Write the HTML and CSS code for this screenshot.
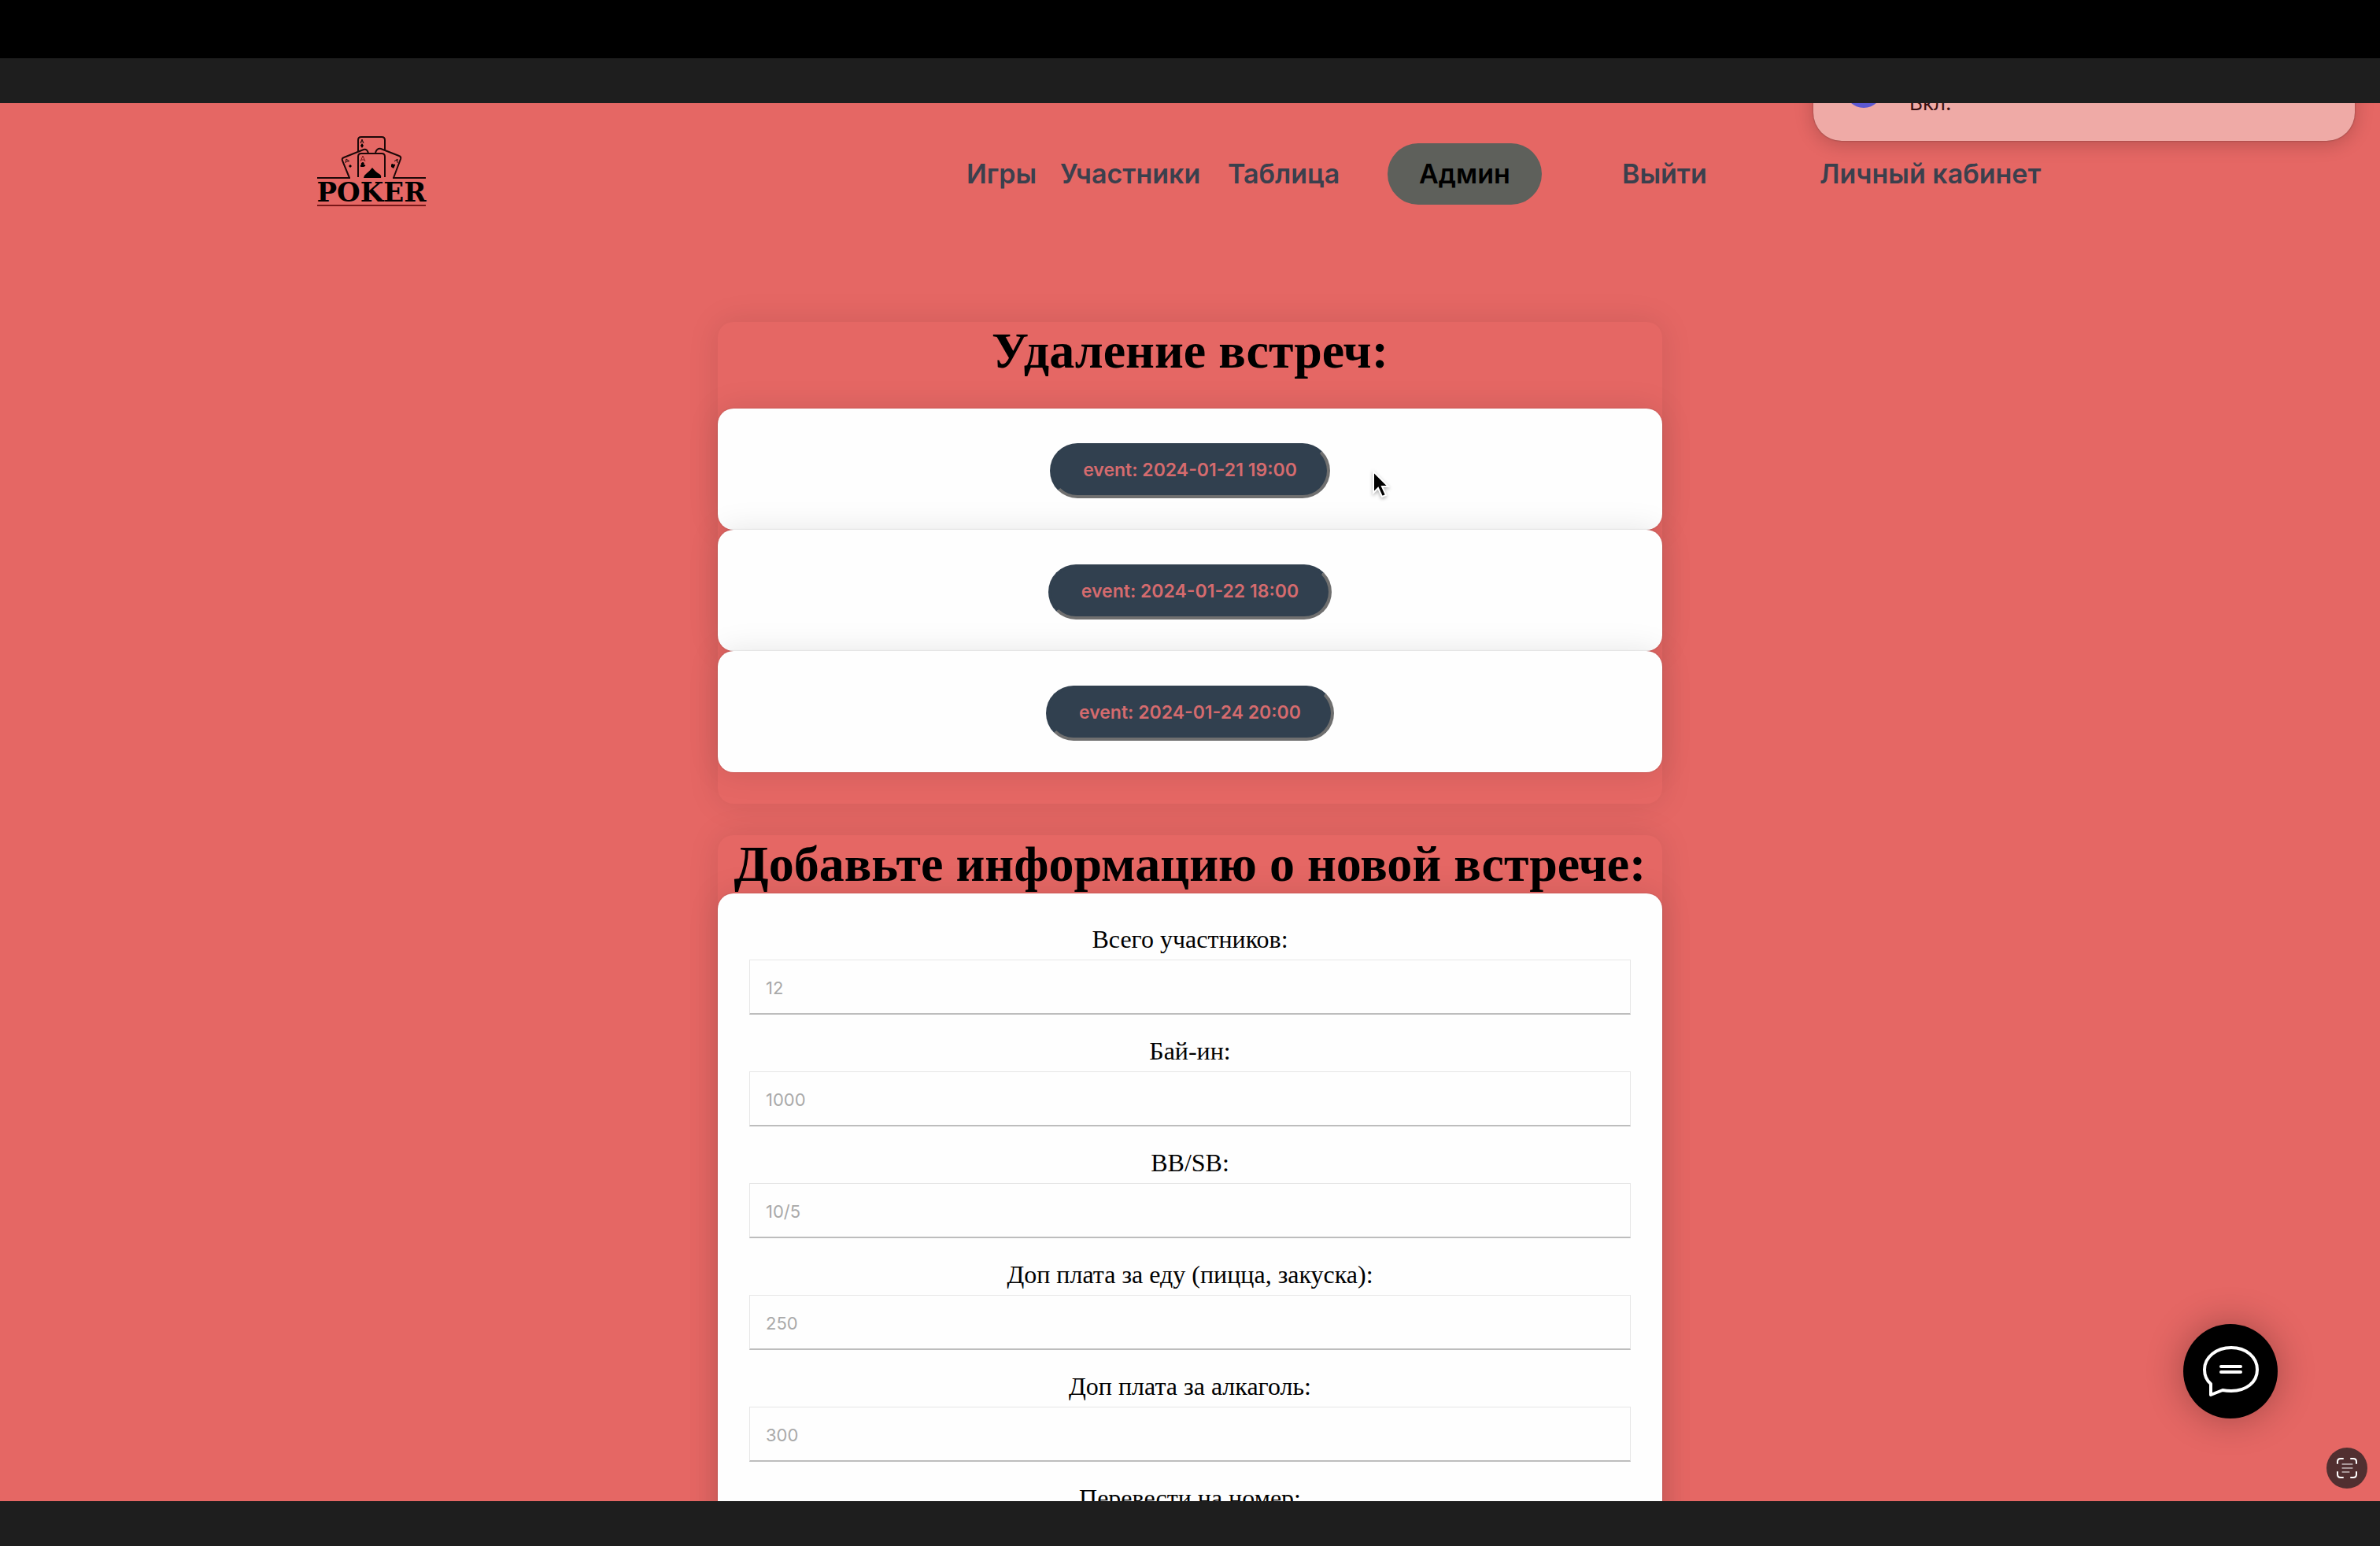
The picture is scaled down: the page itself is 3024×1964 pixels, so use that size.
FILE: index.html
```html
<!DOCTYPE html>
<html lang="ru">
<head>
<meta charset="utf-8">
<meta name="viewport" content="width=device-width, initial-scale=1">
<title>Poker</title>
<link rel="stylesheet" href="styles.css">
</head>
<body>
<div class="bezel"></div>
<div class="strip"></div>
<div class="screen">
  <header class="header">
    <a class="logo" href="#" aria-label="Poker">
      <svg width="144" height="96" viewBox="0 2 144 96" fill="none" stroke="#1c0808" stroke-width="2">
        <path d="M55 22V7q0-4 4-4h26q4 0 4 4v13"/>
        <path d="M44 55 35 33q-1-3 2-4l25-10q5-1 6 5"/>
        <path d="M100 55l9-24q1-3-2-4L84 18q-5-1-7 5"/>
        <path d="M55 54V28q0-4 4-4h26q4 0 4 4v26"/>
        <path d="M3 55h42M99 55h42"/>
        <path d="M3 90h138" stroke="#7a1718"/>
        <g stroke-width="1">
          <path d="M58 11l2-5 2 5M59 9h2"/>
          <path d="M39 36l1-5 4 3M40 34h3M101 34l4-3 0 5M103 33h2"/>
          <path d="M58 34l3-7 3 7M59 32h4" stroke="#7a1718"/>
        </g>
        <g fill="#000" stroke="none">
          <path d="M60 11l2 3-2 3-2-3zM45 38l2 2-2 2-2-2zM97 38q2-2 3 0 3-1 2 1l-2 4-3-2z"/>
          <path d="M61 35q3 1 1 3 3 0 2 2l-2 1h-2q-3 0-2-2l1-1q-1-2 2-3z"/>
          <path d="M73 42q5 6 9 8 3 2 2 5H62q0-3 3-5 5-4 8-8z"/>
          <text class="logo-text" x="72" y="85" text-anchor="middle">POKER</text>
        </g>
      </svg>
    </a>
    <nav class="nav">
      <a href="#">Игры</a>
      <a href="#">Участники</a>
      <a href="#">Таблица</a>
      <a href="#" class="active">Админ</a>
      <a href="#">Выйти</a>
      <a href="#">Личный кабинет</a>
    </nav>
  </header>

  <main class="main">
    <section class="panel panel-events">
      <h1>Удаление встреч:</h1>
      <form class="card event"><button type="button">event: 2024-01-21 19:00</button></form>
      <form class="card event"><button type="button">event: 2024-01-22 18:00</button></form>
      <form class="card event"><button type="button">event: 2024-01-24 20:00</button></form>
    </section>

    <section class="panel">
      <h1>Добавьте информацию о новой встрече:</h1>
      <form class="card fields">
        <div class="field"><label for="total">Всего участников:</label><input id="total" type="text" placeholder="12"></div>
        <div class="field"><label for="buyin">Бай-ин:</label><input id="buyin" type="text" placeholder="1000"></div>
        <div class="field"><label for="blinds">BB/SB:</label><input id="blinds" type="text" placeholder="10/5"></div>
        <div class="field"><label for="food">Доп плата за еду (пицца, закуска):</label><input id="food" type="text" placeholder="250"></div>
        <div class="field"><label for="alcohol">Доп плата за алкаголь:</label><input id="alcohol" type="text" placeholder="300"></div>
        <div class="field"><label for="phone">Перевести на номер:</label><input id="phone" type="text"></div>
      </form>
    </section>
  </main>

  <div class="notice"><span class="notice-icon"></span><span>Вкл.</span></div>

  <button class="chat" type="button" aria-label="Чат">
    <svg width="72" height="68" viewBox="0 0 72 68" fill="none" stroke="#fff" stroke-width="4" stroke-linecap="round" stroke-linejoin="round">
      <path d="M11 50C5 45 3 39 3 32 3 16 18 4 37 4s33 12 33 28-14 27-33 27q-6 0-11-1L11 64z"/>
      <path d="M24 28h25M24 35h25"/>
    </svg>
  </button>
  <button class="scan" type="button" aria-label="Распознать текст">
    <svg width="28" height="28" viewBox="0 0 28 28" fill="none" stroke="#fff" stroke-width="2" stroke-linecap="round">
      <path d="M2 8V6q0-4 4-4h3M19 2h3q4 0 4 4v2M26 19v3q0 4-4 4h-3M9 26H6q-4 0-4-4v-3"/>
      <path d="M8 9h13M8 14h13M8 19h9" stroke-width="1"/>
    </svg>
  </button>
  <svg class="cursor" width="28" height="38" viewBox="0 0 28 38">
    <path d="M3 2v27l6-6 5 11 5-2-5-11h8z" fill="#000" stroke="#fff" stroke-width="2"/>
  </svg>
</div>
<div class="strip"></div>
</body>
</html>
```

FILE: styles.css
```css
* {
  box-sizing: border-box;
}

body {
  margin: 0;
  height: 100vh;
  display: flex;
  flex-direction: column;
  overflow: hidden;
  background: #1e1e1e;
  font-family: "Liberation Serif", serif;
  color: #000;
}

.bezel {
  flex: none;
  height: 74px;
  background: #000;
}

.strip {
  flex: none;
  height: 57px;
}

.screen {
  position: relative;
  flex: 1;
  min-height: 0;
  overflow: hidden;
  background: #e56764;
}

.header {
  display: flex;
  align-items: center;
  justify-content: space-between;
  max-width: 2224px;
  height: 180px;
  margin: 0 auto;
}

.logo svg {
  display: block;
}

.logo-text {
  font: bold 34px "DejaVu Serif", serif;
}

.nav {
  display: grid;
  grid-template-columns: 119px 213px 203px 298px 251px 312px;
  align-items: center;
  font: 600 34px/38px Inter, sans-serif;
}

.nav a {
  color: #3b404d;
  text-decoration: none;
  white-space: nowrap;
}

.nav .active {
  justify-self: start;
  padding: 20px 40px;
  border-radius: 40px;
  background: #5e605b;
  color: #000;
}

.main {
  display: flex;
  flex-direction: column;
  align-items: center;
  gap: 40px;
  padding-top: 98px;
}

.panel {
  width: 100%;
  max-width: 1200px;
  border-radius: 20px;
  box-shadow: 0 0 40px rgba(0, 0, 0, 0.1);
}

.panel-events {
  padding-bottom: 40px;
}

.panel h1 {
  margin: 0;
  font-size: 64px;
  line-height: 74px;
  text-align: center;
}

.panel-events h1 {
  margin-bottom: 36px;
}

.card {
  border-radius: 20px;
  background: #fefefe;
  box-shadow: 0 0 40px rgba(0, 0, 0, 0.1), 0 0 2px rgba(0, 0, 0, 0.2);
}

.event {
  display: flex;
  justify-content: center;
  padding: 44px 0 40px;
}

.event button {
  height: 70px;
  padding: 0 38px 2px;
  border: 4px solid;
  border-color: #31404f #6f6f6f #6f6f6f #31404f;
  border-radius: 35px;
  background: #31404f;
  color: #d56b6e;
  font: 600 23px/28px Inter, sans-serif;
}

.fields {
  padding: 40px 40px 12px;
}

.field {
  display: flex;
  flex-direction: column;
  gap: 8px;
  padding-bottom: 28px;
}

.field label {
  font-size: 32px;
  line-height: 36px;
  text-align: center;
}

.field input {
  width: 100%;
  height: 70px;
  padding: 2px 20px 0;
  border: 1px solid #e6e6e6;
  border-bottom: 2px solid #bdbdbd;
  background: #fefefe;
  font: 400 22px/28px Inter, sans-serif;
}

.field input::placeholder {
  color: #a9a9a9;
}

.notice {
  position: absolute;
  top: -80px;
  right: 32px;
  display: flex;
  align-items: flex-end;
  gap: 34px;
  width: 688px;
  height: 128px;
  padding: 0 40px 32px;
  border-radius: 36px;
  background: #efaaa6;
  box-shadow: 0 4px 24px rgba(0, 0, 0, 0.2), 0 0 2px rgba(0, 0, 0, 0.4);
  color: #3a0f10;
  font: 400 26px/32px Inter, sans-serif;
}

.notice-icon {
  width: 48px;
  height: 48px;
  margin-bottom: 10px;
  border-radius: 50%;
  background: #5c58d2;
}

.chat,
.scan {
  position: absolute;
  display: grid;
  place-items: center;
  padding: 0;
  border: 0;
  border-radius: 50%;
}

.chat {
  right: 130px;
  bottom: 105px;
  width: 120px;
  height: 120px;
  background: #000;
  box-shadow: 0 0 48px rgba(0, 0, 0, 0.3);
}

.scan {
  right: 16px;
  bottom: 16px;
  width: 52px;
  height: 52px;
  background: #512f30;
}

.cursor {
  position: absolute;
  left: 1742px;
  top: 466px;
  filter: drop-shadow(0 2px 2px rgba(0, 0, 0, 0.3));
}
```
